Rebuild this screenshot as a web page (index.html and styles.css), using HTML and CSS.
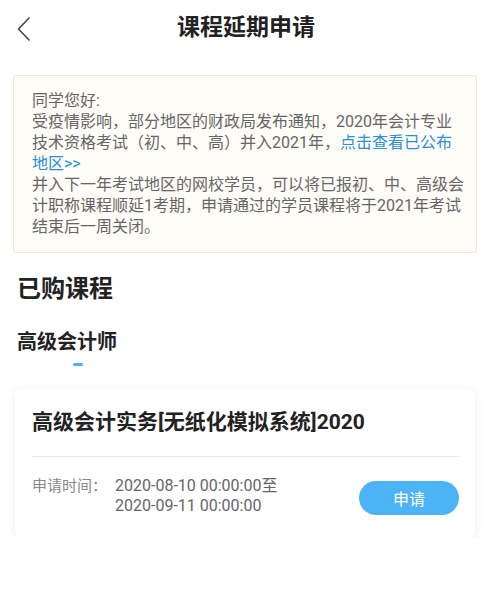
FILE: index.html
```html
<!DOCTYPE html>
<html lang="zh">
<head>
<meta charset="utf-8">
<title>课程延期申请</title>
<link rel="stylesheet" href="styles.css">
</head>
<body>
<header class="topbar">
  <a class="back" href="#" aria-label="返回">
    <svg width="14" height="24" viewBox="0 0 14 24"><path d="M12 1 L1.5 12 L12 23" fill="none" stroke="#444" stroke-width="1.6" stroke-linecap="round" stroke-linejoin="round"/></svg>
  </a>
  <h1 class="title">课程延期申请</h1>
  <span></span>
</header>

<section class="notice">
  <p>同学您好:</p>
  <p>受疫情影响，部分地区的财政局发布通知，2020年会计专业技术资格考试（初、中、高）并入2021年，<a class="link" href="#">点击查看已公布地区&gt;&gt;</a></p>
  <p>并入下一年考试地区的网校学员，可以将已报初、中、高级会计职称课程顺延1考期，申请通过的学员课程将于2021年考试结束后一周关闭。</p>
</section>

<h2 class="section-title">已购课程</h2>

<div class="tabs">
  <div class="tab active">高级会计师</div>
  <div class="tab-indicator"></div>
</div>

<div class="card">
  <div class="card-title">高级会计实务[无纸化模拟系统]2020</div>
  <div class="card-row">
    <div class="label">申请时间：</div>
    <div class="dates">2020-08-10 00:00:00至<br>2020-09-11 00:00:00</div>
    <button class="apply">申请</button>
  </div>
</div>
</body>
</html>
```

FILE: styles.css
```css
* { box-sizing: border-box; }
html, body { margin: 0; padding: 0; background: #fff; }
body {
  font-family: Roboto, "Noto Sans CJK SC", sans-serif;
  color: #222;
  width: 495px;
}

.topbar {
  display: grid;
  grid-template-columns: 1fr auto 1fr;
  align-items: center;
  height: 57px;
}
.back {
  display: flex;
  align-items: center;
  padding-left: 17px;
  height: 100%;
}
.title {
  margin: -2px 0 0 -3px;
  font-size: 23px;
  font-weight: 700;
  color: #222;
  line-height: 32px;
}

.notice {
  margin: 18px 18px 0 13px;
  background: #fefcf6;
  border: 1px solid #efe8d6;
  border-radius: 3px;
  padding: 14px 9px 15px 18px;
  color: #666;
  font-size: 16px;
  line-height: 21px;
}
.notice p { margin: 0; }
.link { color: #2b8fd9; text-decoration: none; }

.section-title {
  margin: 20px 0 0 17px;
  font-size: 24px;
  line-height: 32px;
  font-weight: 700;
  color: #222;
}

.tabs {
  margin: 23px 0 0 17px;
  display: flex;
  flex-direction: column;
}
.tab {
  font-size: 20px;
  line-height: 28px;
  font-weight: 700;
  color: #222;
}
.tab-indicator {
  width: 10px;
  height: 3px;
  border-radius: 2px;
  background: #4ab2f5;
  margin: 7px 0 0 56px;
}

.card {
  margin: 23px 20px 0 15px;
  background: #fff;
  border-radius: 6px;
  box-shadow: 0 2px 10px rgba(0, 0, 0, 0.08);
  padding: 18px 16px 21px 17px;
}
.card-title {
  font-size: 21px;
  line-height: 30px;
  font-weight: 700;
  color: #222;
  padding-bottom: 19px;
  border-bottom: 1px solid #e8e8e8;
}
.card-row {
  display: flex;
  align-items: center;
  padding-top: 19px;
}
.label {
  width: 83px;
  align-self: flex-start;
  font-size: 15px;
  line-height: 20px;
  color: #888;
}
.dates {
  flex: 1;
  font-size: 16px;
  line-height: 20px;
  color: #666;
}
.apply {
  width: 100px;
  height: 34px;
  border: none;
  border-radius: 17px;
  background: #4cb3f7;
  color: #fff;
  font-family: inherit;
  font-size: 16px;
  margin-top: 4px;
  padding: 0;
}
```
